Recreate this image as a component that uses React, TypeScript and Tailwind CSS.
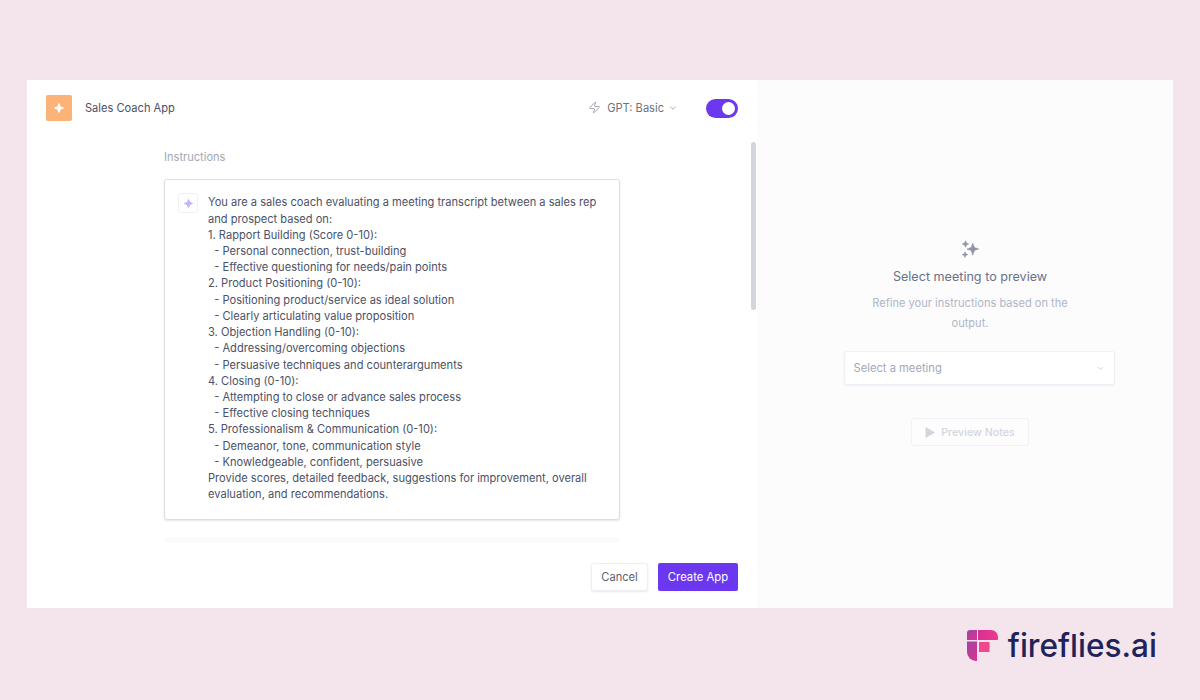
import React from 'react';
import { ChevronDown, Zap } from 'lucide-react';

const INSTRUCTIONS = [
  'You are a sales coach evaluating a meeting transcript between a sales rep',
  'and prospect based on:',
  '1. Rapport Building (Score 0-10):',
  '  - Personal connection, trust-building',
  '  - Effective questioning for needs/pain points',
  '2. Product Positioning (0-10):',
  '  - Positioning product/service as ideal solution',
  '  - Clearly articulating value proposition',
  '3. Objection Handling (0-10):',
  '  - Addressing/overcoming objections',
  '  - Persuasive techniques and counterarguments',
  '4. Closing (0-10):',
  '  - Attempting to close or advance sales process',
  '  - Effective closing techniques',
  '5. Professionalism & Communication (0-10):',
  '  - Demeanor, tone, communication style',
  '  - Knowledgeable, confident, persuasive',
  'Provide scores, detailed feedback, suggestions for improvement, overall',
  'evaluation, and recommendations.',
];

function Sparkle({ className }: { className?: string }) {
  return (
    <svg viewBox="0 0 24 24" className={className} fill="currentColor" stroke="currentColor" strokeWidth="2" strokeLinejoin="round">
      <path d="M12 3l2.600 6.400L21 12l-6.400 2.600L12 21l-2.600-6.400L3 12l6.400-2.600z" />
    </svg>
  );
}

function Sparkles({ className }: { className?: string }) {
  return (
    <svg viewBox="0 0 18 18" className={className} fill="currentColor" stroke="currentColor" strokeWidth=".6" strokeLinejoin="round">
      <path d="M11.800 3.200l1.600 4.200 4.200 1.600-4.200 1.600-1.600 4.600-1.600-4.600L6 9l4.200-1.600z" />
      <path d="M4.500 .8l.9 2.300 2.300.9-2.300.9-.9 2.300-.9-2.300-2.300-.9 2.300-.9z" />
      <path d="M4 11.800l.8 2 2 .8-2 .8-.8 2-.8-2-2-.8 2-.8z" />
    </svg>
  );
}

function FirefliesLogo() {
  return (
    <svg viewBox="0 0 31 31" className="h-[31px] w-[31px]">
      <defs>
        <linearGradient id="ffA" x1="0" y1="0" x2="1" y2="1">
          <stop offset="0" stopColor="#9f45a6" />
          <stop offset="1" stopColor="#d9328f" />
        </linearGradient>
        <linearGradient id="ffB" x1="0" y1="0" x2="1" y2="0">
          <stop offset="0" stopColor="#d72f92" />
          <stop offset="1" stopColor="#ee3a8c" />
        </linearGradient>
      </defs>
      <path d="M0 3a3 3 0 0 1 3-3h7v10H0z" fill="url(#ffA)" />
      <path d="M11 0h13a7 7 0 0 1 7 7v2a1 1 0 0 1-1 1H11z" fill="url(#ffB)" />
      <path d="M0 11.500h10V31H9a9 9 0 0 1-9-9z" fill="url(#ffA)" />
      <path d="M12 12h10.500v10H12z" fill="#f0478f" />
    </svg>
  );
}

export default function App() {
  return (
    <div className="flex h-[700px] w-[1200px] flex-col overflow-hidden bg-[#f4e4ec] px-[27px] pt-[80px] font-['Inter',sans-serif]">
      <div className="flex h-[528px] w-[1146px] shrink-0">
        {/* Left panel */}
        <div className="relative flex w-[730px] flex-col bg-white">
          <div className="flex h-[56px] shrink-0 items-center pl-[19px] pr-[19px]">
            <div className="flex h-[26px] w-[26px] items-center justify-center rounded-[2px] bg-[#fbb377] text-white">
              <Sparkle className="h-[12px] w-[12px]" />
            </div>
            <span className="ml-[13px] text-[11.1px] text-[#4b5166]">Sales Coach App</span>
            <div className="ml-auto flex items-center text-[#6b7280]">
              <Zap size={13} strokeWidth={1.5} className="text-[#8b909c]" />
              <span className="ml-[6px] text-[11.1px]">GPT: Basic</span>
              <ChevronDown size={10} className="ml-[4px] text-[#9ca3af]" />
            </div>
            <div className="ml-[28px] flex h-[19px] w-[32px] items-center justify-end rounded-full bg-[#6b38ef] pr-[3px]">
              <div className="h-[13px] w-[13px] rounded-full bg-white" />
            </div>
          </div>

          <div className="flex min-h-0 flex-1 flex-col overflow-hidden pl-[137px]">
            <div className="pt-[15px] text-[11.1px] leading-[13px] text-[#a3a8b4]">Instructions</div>
            <div className="mt-[15px] flex h-[341px] w-[456px] shrink-0 rounded-[3px] border border-[#dcdee6] bg-white pl-[13px] pt-[14px] shadow-[0_1px_2px_rgba(30,30,60,0.12)]">
              <div className="-mt-px flex h-[20px] w-[20px] shrink-0 items-center justify-center rounded-[3px] border border-[#f1f0f7] text-[#c3b0fb]">
                <Sparkle className="h-[11px] w-[11px]" />
              </div>
              <div className="ml-[10px] mt-[0.4px] whitespace-pre text-[11.1px] leading-[16.22px] text-[#4b5166]">
                {INSTRUCTIONS.join('\n')}
              </div>
            </div>
            <div className="mt-[17px] h-[6px] w-[456px] shrink-0 bg-[#fbfbfc]" />
          </div>

          <div className="flex shrink-0 justify-end gap-[10px] pb-[17px] pr-[19px] pt-[14px]">
            <button className="h-[28px] w-[57px] rounded-[3px] border border-[#eeeff3] bg-white text-[11.1px] text-[#5a6072] shadow-[0_1px_2px_rgba(30,30,60,0.1)]">
              Cancel
            </button>
            <button className="h-[28px] w-[80px] rounded-[2px] bg-[#6b38ef] text-[11.3px] text-white">Create App</button>
          </div>

          {/* Scroll thumb */}
          <div className="absolute left-[724px] top-[62px] h-[168px] w-[5px] rounded-full bg-[#d3d6dd]" />
        </div>

        {/* Right panel */}
        <div className="flex w-[416px] flex-col items-center bg-[#fcfcfd] pl-[10px] pt-[160px]">
          <Sparkles className="h-[18px] w-[18px] text-[#8f95a8]" />
          <div className="mt-[10px] text-[12.6px] leading-[17px] text-[#6b7286]">Select meeting to preview</div>
          <div className="mt-[8px] w-[220px] text-center text-[11.1px] leading-[20px] text-[#b0b5c8]">
            Refine your instructions based on the output.
          </div>
          <div className="ml-[18px] mt-[18px] flex h-[34px] w-[271px] items-center justify-between rounded-[3px] border border-[#eff0f5] bg-white pl-[9px] pr-[9px] shadow-[0_1px_2px_rgba(30,30,60,0.06)]">
            <span className="text-[11.2px] text-[#a3a8ba]">Select a meeting</span>
            <ChevronDown size={9} className="text-[#c4c8d4]" />
          </div>
          <div className="mt-[33px] flex h-[28px] w-[118px] items-center justify-center rounded-[3px] border border-[#f1f2f6] bg-[#fdfdfe]">
            <svg viewBox="0 0 10 11" className="h-[11px] w-[10px] text-[#d3d6e0]" fill="currentColor">
              <path d="M.5 1v9a.6.6 0 0 0 .9.5l8-4.500a.6.6 0 0 0 0-1l-8-4.500A.6.6 0 0 0 .5 1z" />
            </svg>
            <span className="ml-[6px] mt-[2px] text-[10.7px] font-medium text-[#d3d6e0]">Preview Notes</span>
          </div>
        </div>
      </div>

      {/* Brand */}
      <div className="flex items-center justify-end pr-[16px] pt-[22px]">
        <FirefliesLogo />
        <span className="ml-[10px] text-[31.6px] font-medium leading-[31px] text-[#20235a]">fireflies.ai</span>
      </div>
    </div>
  );
}
